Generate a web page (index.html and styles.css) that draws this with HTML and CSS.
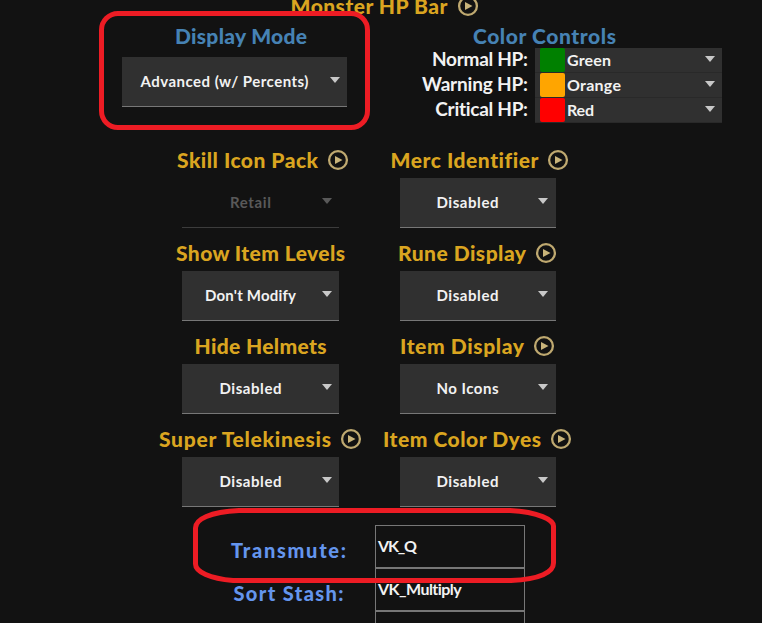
FILE: index.html
```html
<!DOCTYPE html>
<html lang="en">
<head>
<meta charset="utf-8">
<title>Mod Settings</title>
<link rel="stylesheet" href="styles.css">
</head>
<body>
<svg class="defs" width="0" height="0" aria-hidden="true">
  <symbol id="play" viewBox="0 0 22 22">
    <circle cx="11" cy="11" r="8.9" fill="none" stroke="#bfa970" stroke-width="2.300"/>
    <path d="M8 7v8l7.500-4z" fill="#c9b47a"/>
  </symbol>
</svg>
<main class="page">
  <h1 class="heading title"><span data-w="157">Monster HP Bar</span><svg class="play"><use href="#play"/></svg></h1>

  <section class="hp">
    <div class="mode">
      <h2 class="heading sub"><span data-w="132">Display Mode</span></h2>
      <div class="select wide"><span data-w="168">Advanced (w/ Percents)</span><i class="arrow"></i></div>
      <div class="mark mark-mode"></div>
    </div>
    <div class="colors">
      <h2 class="heading sub"><span data-w="143">Color Controls</span></h2>
      <div class="color-row"><label><span data-w="96">Normal HP:</span></label><div class="color"><b class="swatch green"></b><span data-w="44">Green</span><i class="arrow"></i></div></div>
      <div class="color-row"><label><span data-w="106">Warning HP:</span></label><div class="color"><b class="swatch orange"></b><span data-w="54">Orange</span><i class="arrow"></i></div></div>
      <div class="color-row"><label><span data-w="93">Critical HP:</span></label><div class="color"><b class="swatch red"></b><span data-w="27">Red</span><i class="arrow"></i></div></div>
    </div>
  </section>

  <section class="options">
    <div class="option">
      <h2 class="heading shifted"><span data-w="141">Skill Icon Pack</span><svg class="play"><use href="#play"/></svg></h2>
      <div class="select disabled"><span data-w="41">Retail</span><i class="arrow"></i></div>
    </div>
    <div class="option">
      <h2 class="heading shifted"><span data-w="148">Merc Identifier</span><svg class="play"><use href="#play"/></svg></h2>
      <div class="select"><span data-w="62">Disabled</span><i class="arrow"></i></div>
    </div>
    <div class="option">
      <h2 class="heading"><span data-w="169">Show Item Levels</span></h2>
      <div class="select"><span data-w="91">Don't Modify</span><i class="arrow"></i></div>
    </div>
    <div class="option">
      <h2 class="heading"><span data-w="128">Rune Display</span><svg class="play"><use href="#play"/></svg></h2>
      <div class="select"><span data-w="62">Disabled</span><i class="arrow"></i></div>
    </div>
    <div class="option">
      <h2 class="heading"><span data-w="132">Hide Helmets</span></h2>
      <div class="select"><span data-w="62">Disabled</span><i class="arrow"></i></div>
    </div>
    <div class="option">
      <h2 class="heading"><span data-w="124">Item Display</span><svg class="play"><use href="#play"/></svg></h2>
      <div class="select"><span data-w="62">No Icons</span><i class="arrow"></i></div>
    </div>
    <div class="option">
      <h2 class="heading"><span data-w="172">Super Telekinesis</span><svg class="play"><use href="#play"/></svg></h2>
      <div class="select"><span data-w="62">Disabled</span><i class="arrow"></i></div>
    </div>
    <div class="option">
      <h2 class="heading"><span data-w="158">Item Color Dyes</span><svg class="play"><use href="#play"/></svg></h2>
      <div class="select"><span data-w="62">Disabled</span><i class="arrow"></i></div>
    </div>
  </section>

  <section class="keys">
    <div class="key-row"><div class="key-name"><span data-w="115">Transmute:</span></div><div class="key-input"><span data-w="39">VK_Q</span></div></div>
    <div class="key-row"><div class="key-name"><span data-w="110">Sort Stash:</span></div><div class="key-input"><span data-w="84">VK_Multiply</span></div></div>
    <div class="key-row"><div class="key-name"></div><div class="key-input"></div></div>
    <svg class="mark-key" width="364" height="76" viewBox="0 0 364 76"><path d="M46 2.500H317C346 4 360.500 12 360.500 18V55C360.500 64 347 71.500 318 72.500H40C17 70.500 2.500 64 2.500 56V20C2.500 11 17 4 46 2.500Z" fill="none" stroke="#ed1c24" stroke-width="5"/></svg>
  </section>
</main>
<script src="fit.js"></script>
</body>
</html>
```
FILE: fit.js
```js
// Tracks each label so that it fills its nominal width.
document.querySelectorAll('[data-w]').forEach(function (el) {
  var target = Number(el.dataset.w);
  var natural = el.getBoundingClientRect().width;
  var gap = (target - natural) / (el.textContent.length - 1);
  el.style.letterSpacing = gap + 'px';
  el.style.marginRight = -gap + 'px';
});
```
FILE: styles.css
```css
* { box-sizing: border-box; }
body {
  margin: 0;
  background: #121212;
  color: #f2f2f2;
  font-family: Lato, "Open Sans", sans-serif;
  overflow: hidden;
}
.defs { display: block; }
.page { width: 762px; height: 623px; overflow: hidden; }
.heading {
  display: flex;
  justify-content: center;
  align-items: center;
  margin: 0;
  height: 36px;
  font-size: 21px;
  line-height: 36px;
  font-weight: 900;
  color: #daa520;
  white-space: nowrap;
}
.heading span, .select span, .color span, label span, .key-row span { flex: none; white-space: nowrap; }
.play { flex: none; width: 22px; height: 22px; margin-left: 9px; }
.title { height: 24px; margin-top: -6px; padding-left: 7px; }
.shifted { padding-left: 5px; }
.sub { color: #4682b4; height: 24px; line-height: 24px; }

.hp { display: flex; height: 124px; padding-top: 6px; }
.mode { position: relative; width: 225px; margin-left: 122px; }
.mode .sub { height: 33px; line-height: 23px; align-items: flex-start; padding-left: 13px; }
.colors { width: 302px; margin-left: 73px; }
.colors .sub { padding-right: 58px; margin-right: -5px; line-height: 22px; }
.color-row { display: flex; height: 25px; }
label {
  display: flex;
  justify-content: flex-end;
  width: 108px;
  font-size: 19px;
  line-height: 21px;
  font-weight: 700;
}
.color {
  display: flex;
  align-items: center;
  width: 187px;
  height: 25px;
  margin-left: 7px;
  padding: 0 7px 0 5px;
  background: #303030;
  border-bottom: 1px solid #292929;
  font-size: 16px;
  line-height: 22px;
  font-weight: 700;
}
.color span { padding-bottom: 1px; }
.swatch { width: 25px; height: 24px; margin-right: 2px; border-radius: 2px; }
.green { background: #008000; }
.orange { background: #ffa500; }
.red { background: #f00; }
.arrow {
  flex: none;
  margin-left: auto;
  border: 5px solid transparent;
  border-top: 6px solid #c8c8c8;
  border-bottom: 0;
}
.color .arrow { margin-bottom: 3px; }

.select {
  display: flex;
  align-items: center;
  justify-content: center;
  position: relative;
  width: 157px;
  height: 50px;
  margin: 0 auto;
  padding: 0 20px 1px 0;
  background: #303030;
  border-bottom: 1px solid #777;
  font-size: 15px;
  font-weight: 700;
}
.select .arrow { position: absolute; right: 7.5px; top: 20px; }
.wide { width: 225px; }
.disabled { background: none; border-color: #3c3c3c; color: #595959; }
.disabled .arrow { border-top-color: #595959; }

.options {
  display: grid;
  grid-template-columns: 217px 217px;
  grid-auto-rows: 93px;
  margin-left: 152px;
}
.option:nth-child(even) .select { width: 156px; }

.mark { position: absolute; border: 5px solid #ed1c24; }
.mark-mode { left: -23px; top: -13px; width: 271px; height: 119px; border-radius: 19px; }

.keys { position: relative; margin: 11px 0 0 192px; }
.key-row { display: flex; height: 43px; }
.key-name {
  width: 183px;
  padding-left: 10px;
  text-align: center;
  font-size: 20px;
  line-height: 50px;
  font-weight: 900;
  color: #6495ed;
}
.key-input {
  width: 150px;
  height: 44px;
  padding-left: 2px;
  border: 1px solid #777;
  border-bottom-width: 2px;
  font-size: 16px;
  line-height: 40px;
  font-weight: 700;
}
.mark-key { position: absolute; left: 1px; top: -17px; }
```
